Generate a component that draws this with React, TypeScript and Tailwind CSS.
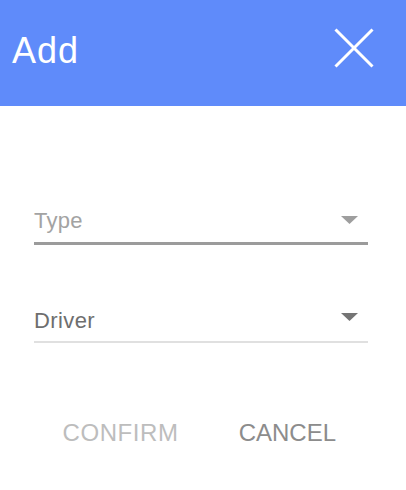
const font = { fontFamily: '"Liberation Sans", Arial, sans-serif' }

function Caret({ className }: { className: string }) {
  return (
    <svg width="17" height="8" viewBox="0 0 17 8" className={className}>
      <path d="M0 0 L17 0 L8.5 8 Z" fill="currentColor" />
    </svg>
  )
}

export default function App() {
  return (
    <div className="w-[406px] h-[490px] bg-white" style={font}>
      <div className="h-[106px] bg-[#5f8bfa] flex items-start justify-between pl-3 pr-8 pt-[28px]">
        <span className="mt-[5px] text-[36px] leading-none tracking-[1px] text-white">Add</span>
        <svg width="40" height="40" viewBox="0 0 40 40" className="text-white">
          <path d="M1.5 1.5 L38.5 38.5 M38.5 1.5 L1.5 38.5" stroke="currentColor" strokeWidth="3" />
        </svg>
      </div>

      <div className="pl-[34px] pr-[38px]">
        <div className="pt-[104px]">
          <div className="flex items-start justify-between pr-[10px]">
            <span className="text-[22px] leading-none tracking-[0.3px] text-[#a3a3a3]">Type</span>
            <Caret className="mt-[6px] text-[#9e9e9e]" />
          </div>
          <div className="mt-[10px] h-[3px] bg-[#9b9b9b]" />
        </div>

        <div className="pt-[65px]">
          <div className="flex items-start justify-between pr-[10px]">
            <span className="text-[22px] leading-none tracking-[0.4px] text-[#6e6e6e]">Driver</span>
            <Caret className="mt-[3px] text-[#757575]" />
          </div>
          <div className="mt-[9px] h-[2px] bg-[#e0e0e0]" />
        </div>
      </div>

      <div className="mt-[78px] flex justify-end gap-[60px] pr-[70px]">
        <button className="text-[24px] leading-none tracking-[0.6px] text-[#bdbdbd]">CONFIRM</button>
        <button className="text-[24px] leading-none text-[#8c8c8c]">CANCEL</button>
      </div>
    </div>
  )
}
